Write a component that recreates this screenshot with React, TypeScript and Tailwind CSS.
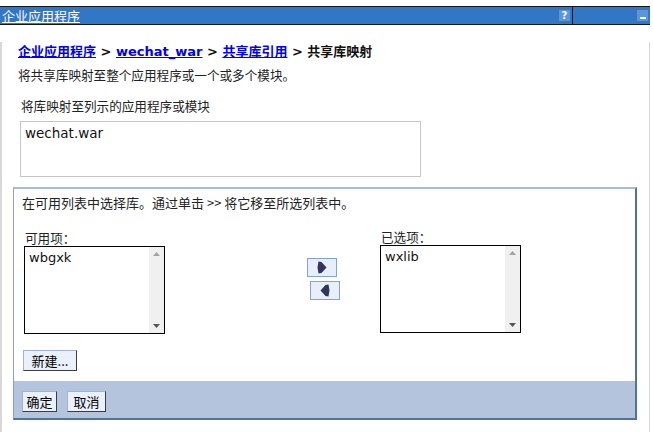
import React from "react";

const F = { fontFamily: '"DejaVu Sans","Noto Sans CJK SC",sans-serif' };
const CJK = { fontFamily: '"Noto Sans CJK SC","DejaVu Sans",sans-serif' };

function ScrollList({ item }: { item: string }) {
  return (
    <div className="w-[141px] h-[88px] border border-black bg-white flex">
      <div className="flex-1 pl-[4px] pt-[2px] text-[13px] leading-[18px] text-[#111]" style={F}>
        {item}
      </div>
      <div className="w-[15px] bg-[#f0f0f0] flex flex-col justify-between items-center py-[5px]">
        <svg width="7" height="4" viewBox="0 0 7 4"><polygon points="0,4 3.5,0 7,4" fill="#a3a3a3" /></svg>
        <svg width="7" height="4" viewBox="0 0 7 4"><polygon points="0,0 3.5,4 7,0" fill="#555" /></svg>
      </div>
    </div>
  );
}

function ArrowBtn({ dir }: { dir: "r" | "l" }) {
  return (
    <div className="w-[30px] h-[19px] bg-[#e9eefb] border border-[#86a3cf] flex items-center justify-center">
      <svg width="10" height="13" viewBox="0 0 10 13">
        {dir === "r" ? (
          <polygon points="1.5,0.5 4.5,1 9.5,6.5 4.5,12 1.5,12.5 0.5,6.5" fill="#34345a" />
        ) : (
          <polygon points="8.5,0.5 5.5,1 0.5,6.5 5.5,12 8.5,12.5 9.5,6.5" fill="#34345a" />
        )}
      </svg>
    </div>
  );
}

function Btn({ children, w }: { children: React.ReactNode; w: string }) {
  return (
    <div
      className={`${w} h-[21px] bg-[#eaf0fc] border border-t-[#9db3d8] border-l-[#9db3d8] border-r-[#3c3c3c] border-b-[#3c3c3c] flex items-center justify-center text-[13px] text-black`}
      style={CJK}
    >
      {children}
    </div>
  );
}

export default function App() {
  return (
    <div className="w-[653px] h-[432px] bg-white pt-[6px] overflow-hidden" style={CJK}>
      {/* title bar */}
      <div className="w-[650px] h-[19px] bg-[#3276c6] border-y border-[#151515] flex items-center">
        <span className="ml-[2px] text-white text-[13px] leading-[16px] underline underline-offset-1" style={CJK}>
          企业应用程序
        </span>
        <div className="flex-1" />
        <div className="w-[11px] h-[11px] bg-[#5d96d6] flex items-center justify-center text-white text-[10px] font-bold leading-none" style={F}>
          ?
        </div>
        <div className="w-px h-full bg-[#151515] ml-[2px]" />
        <div className="w-[64px]" />
        <div className="w-[11px] h-[11px] bg-[#5d96d6] flex items-end justify-center pb-[2px] mr-[2px]">
          <div className="w-[6px] h-[2px] bg-white" />
        </div>
      </div>

      {/* content */}
      <div className="w-[650px] h-[404px] border-l-2 border-r border-b-2 border-[#d8d8d8] border-t-0">
        <div className="ml-[16px] mt-[17px] h-[18px] leading-[18px] text-[13px] font-bold text-[#111] whitespace-nowrap" style={F}>
          <a className="text-[#0000ee] underline" style={CJK}>企业应用程序</a>
          <span> &gt; </span>
          <a className="text-[#0000ee] underline">wechat_war</a>
          <span> &gt; </span>
          <a className="text-[#0000ee] underline" style={CJK}>共享库引用</a>
          <span> &gt; </span>
          <span style={CJK}>共享库映射</span>
        </div>
        <div className="ml-[16px] mt-[6px] h-[18px] leading-[18px] text-[12.6px] text-[#222]">
          将共享库映射至整个应用程序或一个或多个模块。
        </div>
        <div className="ml-[19px] mt-[13px] h-[18px] leading-[18px] text-[12.6px] text-[#222]">
          将库映射至列示的应用程序或模块
        </div>
        <div className="ml-[18px] mt-[6px] w-[401px] h-[56px] border border-[#c6c6c6] pl-[4px] pt-[2px] text-[13.5px] leading-[18px] text-[#111]" style={F}>
          wechat.war
        </div>

        {/* panel */}
        <div className="ml-[11px] mt-[10px] w-[624px] h-[233px] border border-t-2 border-t-[#a9bbdc] border-l-[#8aa0c8] border-r-2 border-r-[#5370a6] border-b-2 border-b-[#5370a6] flex flex-col">
          <div className="pl-[8px] pt-[5px] h-[24px] leading-[18px] text-[13px] text-[#222] whitespace-nowrap">
            在可用列表中选择库。通过单击 &gt;&gt; 将它移至所选列表中。
          </div>
          <div className="flex mt-[16px] pl-[10px]">
            <div className="flex flex-col">
              <div className="pl-[1px] h-[17px] leading-[17px] text-[12.6px] text-[#222]">可用项：</div>
              <ScrollList item="wbgxk" />
            </div>
            <div className="ml-[142px] mt-[29px] flex flex-col gap-[4px]">
              <ArrowBtn dir="r" />
              <div className="ml-[3px]">
                <ArrowBtn dir="l" />
              </div>
            </div>
            <div className="ml-[40px] flex flex-col">
              <div className="pl-[1px] h-[16px] leading-[16px] text-[12.6px] text-[#222]">已选项：</div>
              <ScrollList item="wxlib" />
            </div>
          </div>
          <div className="pl-[9px] mt-[16px]">
            <Btn w="w-[54px]">新建...</Btn>
          </div>
          <div className="flex-1" />
          <div className="h-[37px] bg-[#b4c4dc] pl-[8px] pt-[10px] flex gap-[10px]">
            <div className="h-[20px]">
              <Btn w="w-[35px]">确定</Btn>
            </div>
            <Btn w="w-[39px]">取消</Btn>
          </div>
        </div>
      </div>
    </div>
  );
}
